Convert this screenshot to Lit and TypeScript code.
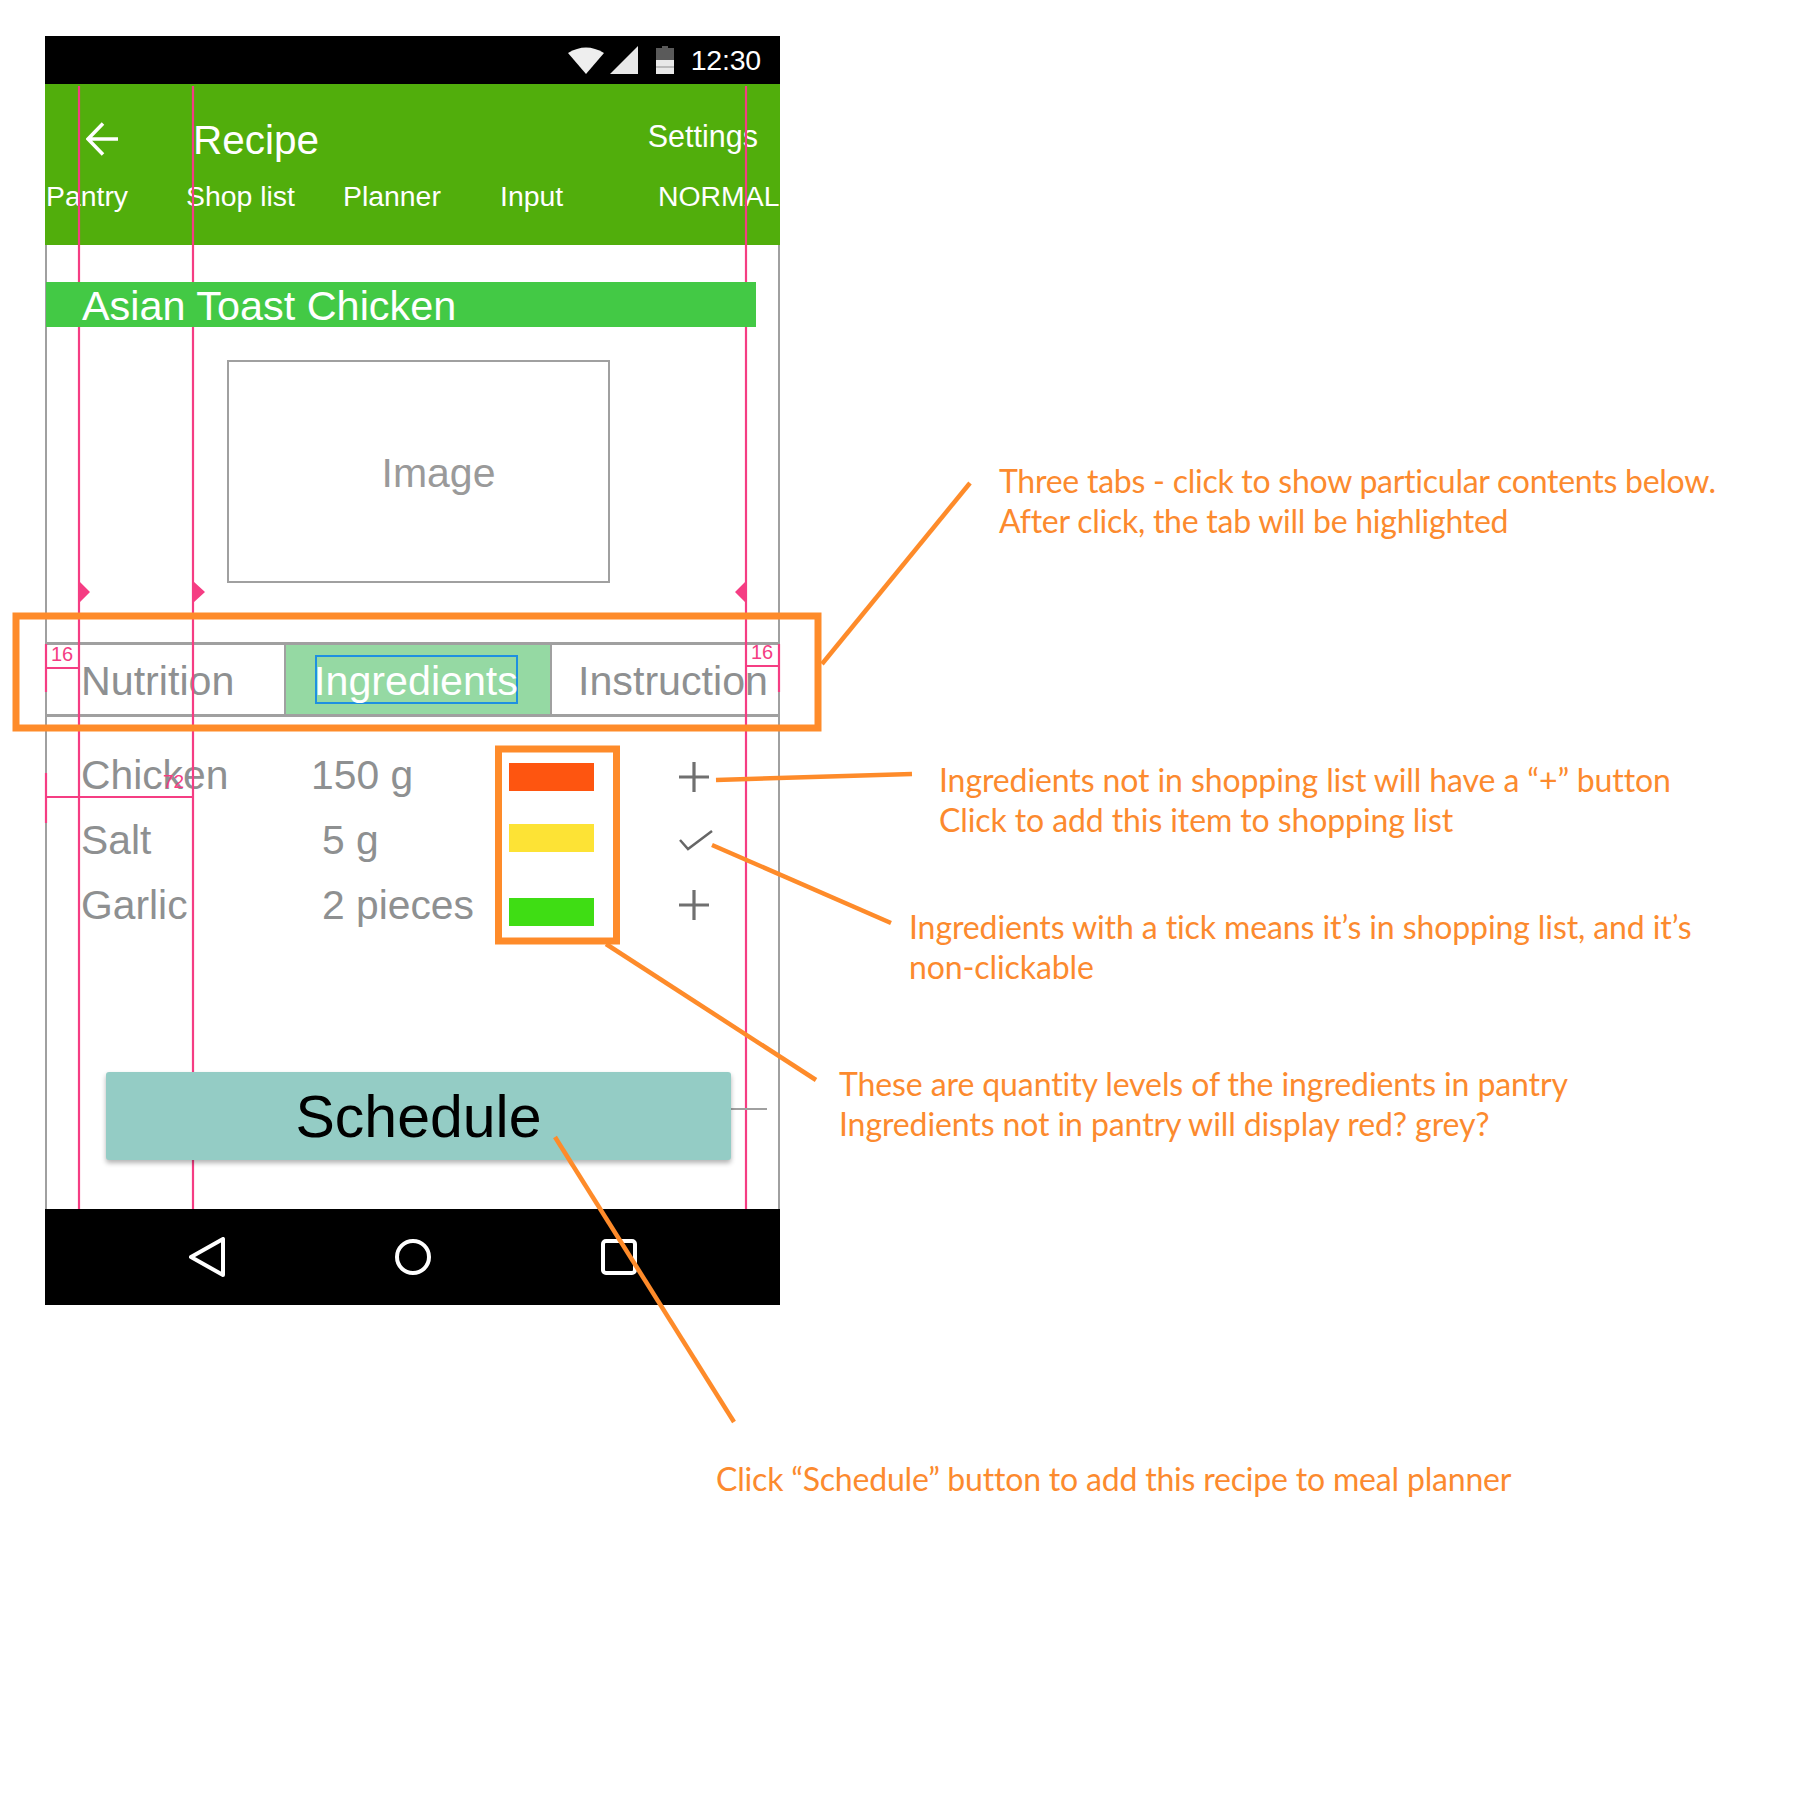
import { LitElement, html, css, svg } from 'lit';
import { customElement } from 'lit/decorators.js';

const NAV_TABS = ['Pantry', 'Shop list', 'Planner', 'Input', 'NORMAL'];

// dy nudges the swatch and iconDy the button, the mockup is not evenly spaced
const INGREDIENTS = [
  { name: 'Chicken', amount: '150 g', indent: 0, level: '#fe5510', dy: 2, iconDy: 2, added: false },
  { name: 'Salt', amount: '5 g', indent: 11, level: '#fde335', dy: -2, iconDy: 0, added: true },
  { name: 'Garlic', amount: '2 pieces', indent: 11, level: '#3fdd14', dy: 7, iconDy: 0, added: false },
];

const NOTES = [
  { x: 999, y: 461, spacing: -0.25, lines: ['Three tabs - click to show particular contents below.', 'After click, the tab will be highlighted'] },
  { x: 939, y: 760, spacing: -0.1, lines: ['Ingredients not in shopping list will have a \u201C+\u201D button', 'Click to add this item to shopping list'] },
  { x: 909, y: 907, spacing: -0.1, lines: ['Ingredients with a tick means it\u2019s in shopping list, and it\u2019s', 'non-clickable'] },
  { x: 839, y: 1064, spacing: -0.1, lines: ['These are quantity levels of the ingredients in pantry', 'Ingredients not in pantry will display red? grey?'] },
  { x: 716, y: 1459, spacing: -0.19, lines: ['Click \u201CSchedule\u201D button to add this recipe to meal planner'] },
];

const LEADERS = [
  [822, 664, 970, 483],
  [716, 780, 912, 774],
  [712, 845, 891, 923],
  [606, 944, 816, 1080],
  [555, 1137, 734, 1422],
];

@customElement('app-root')
export class AppRoot extends LitElement {
  static styles = css`
    :host {
      display: block;
      width: 1800px;
      height: 1800px;
      background: #fff;
      font-family: 'Liberation Sans', Arial, sans-serif;
    }

    .canvas {
      position: relative;
      width: 1800px;
      height: 1800px;
      overflow: hidden;
    }

    .overlay {
      position: absolute;
      left: 0;
      top: 0;
      pointer-events: none;
    }

    .guides { z-index: 1; }
    .callouts { z-index: 3; }

    .phone {
      position: absolute;
      left: 45px;
      top: 36px;
      width: 735px;
      display: flex;
      flex-direction: column;
    }

    .status {
      height: 48px;
      background: #000;
      color: #fff;
      display: flex;
      align-items: center;
      justify-content: flex-end;
      padding-right: 19px;
      font-size: 28.5px;
      box-sizing: border-box;
    }

    .status svg { display: block; }
    .status .time { margin-left: 17px; letter-spacing: -0.2px; }

    .toolbar {
      height: 161px;
      background: #51ae0c;
      color: #fff;
      box-sizing: border-box;
      padding-top: 32px;
    }

    .bar-top {
      display: flex;
      align-items: center;
      height: 46px;
      padding: 0 22px 0 41px;
    }

    .bar-top h1 {
      flex: 1;
      margin: 2px 0 0 75px;
      font-size: 40.5px;
      font-weight: 400;
    }

    .bar-top span {
      font-size: 30.5px;
      margin-top: -6px;
    }

    .bar-tabs {
      display: grid;
      grid-template-columns: 140px 157px 157px 158px 1fr;
      padding-left: 1px;
      margin-top: 17px;
      font-size: 28.4px;
      line-height: 34px;
    }

    .content {
      height: 964px;
      box-sizing: border-box;
      border-left: 2px solid #a0a0a0;
      border-right: 2px solid #a0a0a0;
      display: flex;
      flex-direction: column;
      color: #8e9091;
    }

    .title {
      position: relative;
      z-index: 2;
      margin-top: 37px;
      margin-left: -1px;
      width: 710px;
      height: 45px;
      line-height: 49px;
      box-sizing: border-box;
      padding-left: 36px;
      background: #43c945;
      color: #fff;
      font-size: 41.4px;
    }

    .image {
      margin: 33px 0 0 180px;
      width: 383px;
      height: 223px;
      box-sizing: border-box;
      border: 2px solid #a0a0a0;
      padding: 4px 0 0 40px;
      display: flex;
      align-items: center;
      justify-content: center;
      font-size: 41px;
      color: #9a9a9a;
    }

    .tabs {
      margin-top: 59px;
      height: 75px;
      box-sizing: border-box;
      border-top: 3px solid #a0a0a0;
      border-bottom: 3px solid #a0a0a0;
      display: grid;
      grid-template-columns: 237px 268px 1fr;
      font-size: 41.2px;
    }

    .tab {
      display: flex;
      align-items: center;
      box-sizing: border-box;
      padding: 4px 0 0 34px;
    }

    .tab.active {
      justify-content: center;
      padding: 0;
      background: #95d9a3;
      color: #fff;
      border-left: 2px solid #a0a0a0;
      border-right: 2px solid #a0a0a0;
    }

    .tab.active span {
      border: 2px solid #1e90e0;
      height: 45px;
      line-height: 49px;
      width: 199px;
      margin-right: 4px;
      display: flex;
      justify-content: center;
      white-space: nowrap;
    }

    .rows {
      margin-top: 25px;
      display: grid;
      grid-template-columns: 230px 198px 85px 1fr;
      grid-auto-rows: 65px;
      align-items: center;
      padding-left: 34px;
      font-size: 40.8px;
    }

    .rows span { padding-top: 2px; }

    .swatch { height: 28px; }
    .act { margin-left: 85px; display: block; }

    .schedule {
      position: relative;
      z-index: 2;
      margin: auto 0 49px 59px;
      width: 625px;
      height: 88px;
      border: 0;
      border-radius: 3px;
      background: #94ccc5;
      color: #000;
      font: 59px 'Liberation Sans', Arial, sans-serif;
      box-shadow: 0 3px 5px rgba(0, 0, 0, 0.3);
      padding: 2px 0 0;
    }

    .nav {
      position: relative;
      z-index: 2;
      height: 96px;
      background: #000;
      display: flex;
      align-items: center;
      gap: 170px;
      padding-left: 144px;
    }

    .note {
      position: absolute;
      z-index: 3;
      color: #fc8a2e;
      font-family: Lato, sans-serif;
      font-size: 32px;
      line-height: 40px;
      white-space: nowrap;
    }
  `;

  private guides() {
    const pink = '#f53d83';
    return html`<svg class="overlay guides" width="1800" height="1800">
      <g stroke=${pink} stroke-width="2.2" fill="none">
        <path d="M79 86V1209M193 86V1209M746 86V1209" />
        <path d="M46 644V692M47 668H79M746 666H779M779 644V692" />
        <path d="M46 773V823M46 797H193" />
      </g>
      <g fill=${pink}>
        <path d="M79 581L90 592L79 603ZM193 581L205 592L193 603ZM746 581L735 592L746 603Z" />
        <text x="51" y="661" font-size="20">16</text>
        <text x="751" y="659" font-size="20">16</text>
        <text x="163" y="788" font-size="19">72</text>
      </g>
      <path d="M731 1109H767" stroke="#a0a0a0" stroke-width="2" />
    </svg>`;
  }

  private callouts() {
    return html`<svg class="overlay callouts" width="1800" height="1800">
      <g stroke="#fe8b2a" fill="none">
        <rect x="16" y="616" width="802" height="112" stroke-width="7" />
        <rect x="498.5" y="749" width="118" height="192" stroke-width="7" />
        ${LEADERS.map(([x1, y1, x2, y2]) => svg`<line x1=${x1} y1=${y1} x2=${x2} y2=${y2} stroke-width="4.5" />`)}
      </g>
    </svg>`;
  }

  render() {
    return html`
      <div class="canvas">
        ${this.guides()}
        <div class="phone">
          <div class="status">
            <svg width="38" height="28" viewBox="0 0 38 28"><path d="M1 7Q19 -4 37 7L19 28Z" fill="#eee" /></svg>
            <svg style="margin-left:5px" width="29" height="28" viewBox="0 0 29 28"><path d="M28 0V28H0Z" fill="#e8e8e8" /></svg>
            <svg style="margin-left:17px" width="18" height="28" viewBox="0 0 18 28">
              <path d="M6 0H12V2H18V14H0V2H6Z" fill="#5a5a5a" />
              <path d="M0 14H18V28H0Z" fill="#e8e8e8" />
              <path d="M0 20H18V22H0Z" fill="#bbb" />
            </svg>
            <span class="time">12:30</span>
          </div>
          <div class="toolbar">
            <div class="bar-top">
              <svg width="32" height="34" viewBox="0 0 32 34" fill="none" stroke="#fff" stroke-width="3.5">
                <path d="M32 17H3M17 1.5L2 17L17 32.5" />
              </svg>
              <h1>Recipe</h1>
              <span>Settings</span>
            </div>
            <div class="bar-tabs">${NAV_TABS.map((t) => html`<span>${t}</span>`)}</div>
          </div>
          <div class="content">
            <div class="title">Asian Toast Chicken</div>
            <div class="image">Image</div>
            <div class="tabs">
              <div class="tab">Nutrition</div>
              <div class="tab active"><span>Ingredients</span></div>
              <div class="tab" style="padding-left:26px">Instruction</div>
            </div>
            <div class="rows">
              ${INGREDIENTS.map(
                (r) => html`
                  <span>${r.name}</span>
                  <span style="padding-left:${r.indent}px">${r.amount}</span>
                  <div class="swatch" style="background:${r.level};transform:translateY(${r.dy}px)"></div>
                  ${r.added
                    ? html`<svg class="act" style="transform:translateY(${r.iconDy}px)" width="34" height="22" viewBox="0 0 34 22" fill="none" stroke="#666" stroke-width="2.5"><path d="M1 11L9 20L33 2" /></svg>`
                    : html`<svg class="act" style="transform:translateY(${r.iconDy}px)" width="30" height="30" viewBox="0 0 30 30" fill="none" stroke="#707070" stroke-width="3.2"><path d="M15 0V30M0 15H30" /></svg>`}
                `
              )}
            </div>
            <button class="schedule">Schedule</button>
          </div>
          <div class="nav">
            <svg width="36" height="40" viewBox="0 0 36 40" fill="none" stroke="#fff" stroke-width="4" stroke-linejoin="round">
              <path d="M34 2V38L2 20Z" />
            </svg>
            <svg width="36" height="36" viewBox="0 0 36 36" fill="none" stroke="#fff" stroke-width="4"><circle cx="18" cy="18" r="16" /></svg>
            <svg width="36" height="36" viewBox="0 0 36 36" fill="none" stroke="#fff" stroke-width="4"><rect x="2" y="2" width="32" height="32" rx="3" /></svg>
          </div>
        </div>
        ${this.callouts()}
        ${NOTES.map(
          (n) => html`<div class="note" style="left:${n.x}px;top:${n.y}px;letter-spacing:${n.spacing}px">${n.lines.map((l) => html`<div>${l}</div>`)}</div>`
        )}
      </div>
    `;
  }
}
